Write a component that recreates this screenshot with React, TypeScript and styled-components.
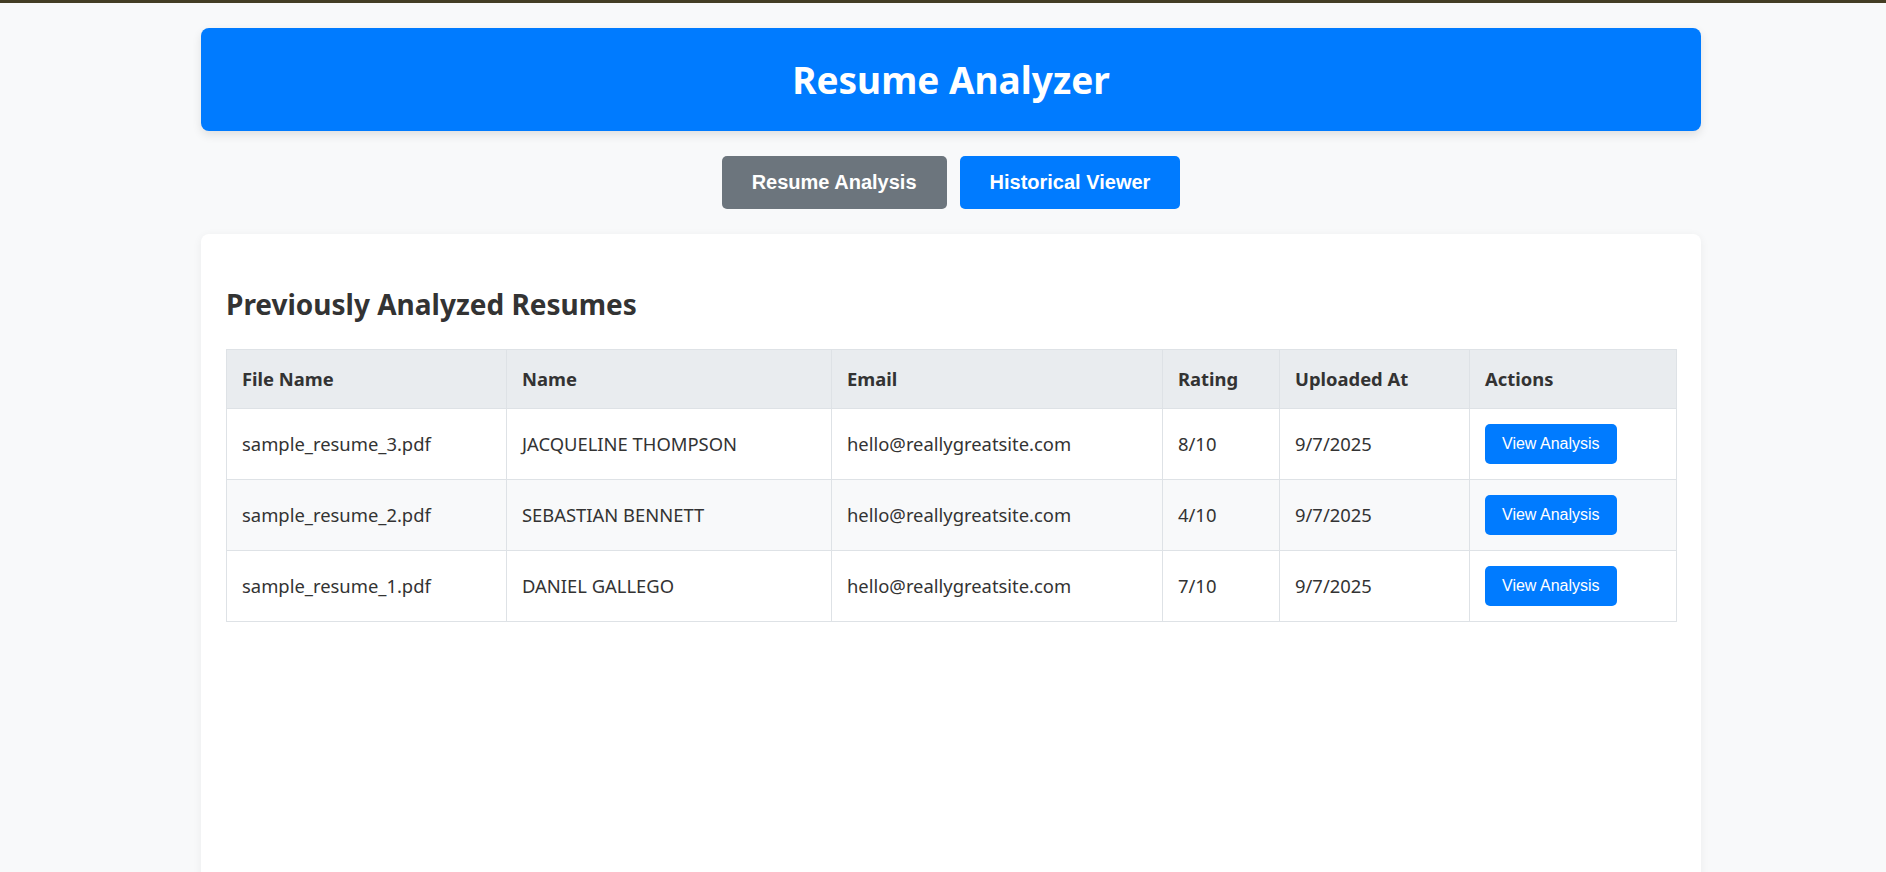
import styled, { createGlobalStyle } from 'styled-components';

const GlobalStyle = createGlobalStyle`
  html, body {
    margin: 0;
    padding: 0;
    background: #f8f9fa;
    font-family: "Noto Sans", "Open Sans", sans-serif;
    color: #333;
    overflow: hidden;
  }
  body {
    border-top: 3px solid #433d24;
    padding-left: 16px;
  }
`;

const Page = styled.div`
  width: 1500px;
  margin: 0 auto;
  padding-top: 25px;
  display: flex;
  flex-direction: column;
  gap: 25px;
`;

const Header = styled.header`
  background: #007bff;
  border-radius: 8px;
  box-shadow: 0 4px 10px rgba(0, 0, 0, 0.1);
  padding: 24px 0;
  text-align: center;
`;

const Title = styled.h1`
  margin: 0;
  color: #fff;
  font-size: 37px;
  line-height: 55px;
  font-weight: 700;
`;

const Tabs = styled.nav`
  display: flex;
  justify-content: center;
  gap: 13px;
`;

const TabButton = styled.button<{ $active?: boolean }>`
  border: none;
  border-radius: 5px;
  padding: 15px 30px;
  font-family: "Liberation Sans", Arial, sans-serif;
  font-size: 20px;
  line-height: 23px;
  font-weight: 700;
  color: #fff;
  background: ${(p) => (p.$active ? '#6c757d' : '#007bff')};
  cursor: pointer;
`;

const Card = styled.section`
  background: #fff;
  border-radius: 8px;
  box-shadow: 0 2px 10px rgba(0, 0, 0, 0.06);
  padding: 25px;
  min-height: 700px;
`;

const Heading = styled.h2`
  margin: 26px 0 26px;
  font-size: 28px;
  line-height: 38px;
  font-weight: 700;
  color: #333;
`;

const Table = styled.table`
  width: 100%;
  border-collapse: collapse;
  table-layout: fixed;
  font-size: 18.4px;
`;

const Col = styled.col<{ $w: number }>`
  width: ${(p) => p.$w}px;
`;

const Th = styled.th`
  background: #e9ecef;
  border: 1px solid #dee2e6;
  padding: 15px;
  line-height: 28px;
  text-align: left;
  font-weight: 700;
  color: #333;
`;

const Row = styled.tr`
  &:nth-child(even) {
    background: #f8f9fa;
  }
`;

const Td = styled.td`
  border: 1px solid #dee2e6;
  padding: 15px;
  line-height: 28px;
  vertical-align: middle;
  color: #333;
`;

const ViewButton = styled.button`
  display: block;
  border: none;
  border-radius: 5px;
  padding: 11px 17px;
  font-family: "Liberation Sans", Arial, sans-serif;
  font-size: 16px;
  line-height: 18px;
  color: #fff;
  background: #007bff;
  cursor: pointer;
`;

const resumes = [
  { file: 'sample_resume_3.pdf', name: 'JACQUELINE THOMPSON', email: 'hello@reallygreatsite.com', rating: '8/10', date: '9/7/2025' },
  { file: 'sample_resume_2.pdf', name: 'SEBASTIAN BENNETT', email: 'hello@reallygreatsite.com', rating: '4/10', date: '9/7/2025' },
  { file: 'sample_resume_1.pdf', name: 'DANIEL GALLEGO', email: 'hello@reallygreatsite.com', rating: '7/10', date: '9/7/2025' },
];

const App = () => {
  return (
    <>
      <GlobalStyle />
      <Page>
        <Header>
          <Title>Resume Analyzer</Title>
        </Header>
        <Tabs>
          <TabButton $active>Resume Analysis</TabButton>
          <TabButton>Historical Viewer</TabButton>
        </Tabs>
        <Card>
          <Heading>Previously Analyzed Resumes</Heading>
          <Table>
            <colgroup>
              <Col $w={280} />
              <Col $w={325} />
              <Col $w={331} />
              <Col $w={117} />
              <Col $w={190} />
              <Col $w={207} />
            </colgroup>
            <thead>
              <tr>
                <Th>File Name</Th>
                <Th>Name</Th>
                <Th>Email</Th>
                <Th>Rating</Th>
                <Th>Uploaded At</Th>
                <Th>Actions</Th>
              </tr>
            </thead>
            <tbody>
              {resumes.map((r) => (
                <Row key={r.file}>
                  <Td>{r.file}</Td>
                  <Td>{r.name}</Td>
                  <Td>{r.email}</Td>
                  <Td>{r.rating}</Td>
                  <Td>{r.date}</Td>
                  <Td>
                    <ViewButton>View Analysis</ViewButton>
                  </Td>
                </Row>
              ))}
            </tbody>
          </Table>
        </Card>
      </Page>
    </>
  );
};

export default App;
